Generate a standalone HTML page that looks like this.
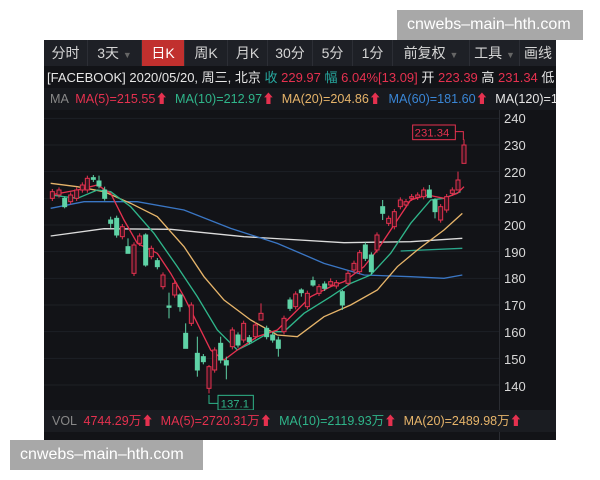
<!DOCTYPE html>
<html><head><meta charset="utf-8"><style>
*{margin:0;padding:0;box-sizing:border-box}
body{width:600px;height:480px;background:#fff;position:relative;overflow:hidden;font-family:"Liberation Sans","Noto Sans CJK SC",sans-serif}
.panel{position:absolute;left:44px;top:40px;width:512px;height:400px;background:#121317}
.tb{position:absolute;left:0;top:0;width:512px;height:26px;background:#1e2026;display:flex}
.tb div{height:26px;line-height:26px;color:#d6d6d6;font-size:14px;text-align:center;border-right:1px solid #2c2e35}
.tb .on{background:#c1302e;color:#fff}
.tb .ar{color:#666;font-size:9px}
.row{position:absolute;left:0;width:512px;white-space:nowrap;overflow:hidden;font-size:12px;padding-left:4px}
.r{color:#e5314f}.g{color:#2fb58a}.o{color:#e6b46a}.b{color:#3a86d6}.w{color:#e6e6e6}.gr{color:#888}.t{color:#27a9a0}
.wm{position:absolute;background:#a8a8a8;color:#fff;font-size:16px;line-height:30px;padding:0 10px}
.ax{position:absolute;left:460px;color:#d8d8d8;font-size:13px}
</style></head><body>
<div class="wm" style="left:397px;top:10px;width:186px">cnwebs–main–hth.com</div>
<div class="panel">
<div class="tb">
<div style="width:44px">分时</div>
<div style="width:54px">3天 <span class="ar">▼</span></div>
<div class="on" style="width:43px">日K</div>
<div style="width:43px">周K</div>
<div style="width:40px">月K</div>
<div style="width:45px">30分</div>
<div style="width:40px">5分</div>
<div style="width:40px">1分</div>
<div style="width:77px">前复权 <span class="ar">▼</span></div>
<div style="width:50px">工具 <span class="ar">▼</span></div>
<div style="width:36px;border:none">画线</div>
</div>
<div class="row w" style="top:28px;height:20px;line-height:20px;font-size:13px;padding-left:3px">[FACEBOOK] 2020/05/20, 周三, 北京 <span class="t">收</span> <span class="r">229.97</span> <span class="t">幅</span> <span class="r">6.04%[13.09]</span> 开 <span class="r">223.39</span> 高 <span class="r">231.34</span> 低</div>
<div class="row" style="top:48px;height:22px;line-height:22px;background:#17191e;padding-left:6px;font-size:12.6px"><span class="gr">MA</span> &nbsp;<span class="r">MA(5)=215.55⬆</span>&nbsp; <span class="g">MA(10)=212.97</span><span class="r">⬆</span>&nbsp; <span class="o">MA(20)=204.86</span><span class="r">⬆</span>&nbsp; <span class="b">MA(60)=181.60</span><span class="r">⬆</span>&nbsp; <span class="w">MA(120)=195</span></div>
<div style="position:absolute;left:455px;top:70px;width:1px;height:330px;background:#2a2c32"></div>
<div class="ax" style="top:71px">240</div><div class="ax" style="top:98px">230</div><div class="ax" style="top:125px">220</div><div class="ax" style="top:151px">210</div><div class="ax" style="top:178px">200</div><div class="ax" style="top:205px">190</div><div class="ax" style="top:231px">180</div><div class="ax" style="top:258px">170</div><div class="ax" style="top:285px">160</div><div class="ax" style="top:312px">150</div><div class="ax" style="top:339px">140</div>
<svg style="position:absolute;left:0;top:70px" width="512" height="300" viewBox="0 0 1536 900">
<g stroke="#1d2026" stroke-width="3">
<line x1="0" y1="25" x2="1365" y2="25"/><line x1="0" y1="105" x2="1365" y2="105"/><line x1="0" y1="185" x2="1365" y2="185"/><line x1="0" y1="265" x2="1365" y2="265"/><line x1="0" y1="345" x2="1365" y2="345"/><line x1="0" y1="425" x2="1365" y2="425"/><line x1="0" y1="505" x2="1365" y2="505"/><line x1="0" y1="585" x2="1365" y2="585"/><line x1="0" y1="665" x2="1365" y2="665"/><line x1="0" y1="745" x2="1365" y2="745"/><line x1="0" y1="825" x2="1365" y2="825"/>
</g>
<g fill="none" stroke-width="4">
<polyline stroke="#dcdcdc" points="20,378 180,356 380,358 600,380 900,398 1100,395 1255,385"/>
<polyline stroke="#3a76c4" points="20,295 120,275 280,275 420,300 560,355 700,400 840,460 960,495 1100,500 1200,505 1255,495"/>
<polyline stroke="#2aa58a" points="1070,423 1255,415"/>
<polyline stroke="#e6b46a" points="20,220 100,230 180,245 260,280 340,320 420,410 480,500 540,570 620,630 700,675 760,680 840,620 920,585 1000,540 1060,470 1120,420 1200,360 1255,310"/>
<polyline stroke="#2fb58a" points="20,255 100,265 160,240 200,245 260,290 330,370 400,470 460,560 520,660 580,720 620,700 680,665 720,665 780,610 860,560 920,520 980,495 1040,430 1100,340 1160,270 1200,265 1250,245"/>
<polyline stroke="#e5314f" points="20,255 100,240 160,225 200,250 240,330 280,400 340,430 380,490 420,560 460,640 500,720 540,750 580,720 640,680 700,660 760,600 800,560 860,530 900,515 960,470 1000,420 1060,330 1100,270 1150,255 1200,265 1240,250 1260,230"/>
</g>
<g id="c" stroke-width="3"></g>
<g fill="none" stroke="#e5314f" stroke-width="3"><rect x="1106" y="45" width="128" height="44"/><polyline points="1234,65 1258,65 1258,90"/></g>
<text x="1112" y="80" fill="#e5314f" font-size="34" font-family="Liberation Sans">231.34</text>
<g fill="none" stroke="#2fb58a" stroke-width="3"><rect x="522" y="856" width="106" height="44"/><polyline points="495,855 495,880 522,880"/></g>
<text x="530" y="893" fill="#2fb58a" font-size="34" font-family="Liberation Sans">137.1</text>
</svg>
<div class="row" style="top:370px;height:22px;line-height:22px;background:#1a1c21;font-size:12.5px;padding-left:8px"><span class="gr">VOL</span> &nbsp;<span class="r">4744.29万⬆</span>&nbsp; <span class="r">MA(5)=2720.31万⬆</span>&nbsp; <span class="g">MA(10)=2119.93万</span><span class="r">⬆</span>&nbsp; <span class="o">MA(20)=2489.98万</span><span class="r">⬆</span></div>
</div>
<div class="wm" style="left:10px;top:440px;width:193px">cnwebs–main–hth.com</div>
<script>
var d=[[25,'r',245,265],[45,'r',240,255],[62,'g',265,290,260,295],[80,'r',255,275],[98,'r',240,265],[115,'r',225,240],[130,'r',205,240],[148,'g',203,208],[165,'g',213,228,197,235],[182,'g',240,265,230,272],[200,'g',330,340,320,355],[218,'g',325,375],[235,'r',350,380],[252,'g',410,430,385,430],[270,'r',405,490],[287,'r',378,400],[305,'g',375,465,370,470],[322,'r',415,440],[340,'g',452,470],[357,'r',495,530],[375,'g',588,592,548,625],[392,'r',520,555],[408,'g',555,590,550,605],[425,'g',670,715,640,715],[442,'r',585,640],[460,'g',730,780,680,800],[478,'g',740,755],[495,'r',770,835,765,850],[512,'r',720,780],[530,'g',700,750,680,760],[547,'g',752,765,740,808],[565,'r',660,710],[582,'g',675,705],[599,'r',640,690],[616,'g',683,695],[634,'r',645,680],[651,'r',610,630,580,630],[668,'g',655,680],[686,'g',675,690],[703,'g',690,715,680,740],[720,'r',625,665],[738,'g',570,595],[755,'r',552,590],[772,'g',540,548,535,560],[790,'r',550,590],[807,'g',512,525,500,530],[825,'r',530,550],[842,'g',522,535],[860,'r',515,525,505,530],[877,'r',518,528],[895,'g',545,585,540,600],[912,'r',490,520],[930,'r',460,480],[947,'r',428,485],[964,'g',405,445],[982,'g',435,485],[999,'r',375,420],[1016,'g',290,310,270,330],[1034,'r',325,340],[1051,'r',305,350],[1069,'r',270,290],[1086,'r',275,285],[1103,'r',260,265],[1121,'r',255,262],[1139,'r',240,260],[1156,'g',240,262,225,262],[1173,'g',270,305,265,325],[1190,'r',290,330],[1208,'r',260,300],[1225,'r',240,250],[1242,'r',210,240,185,240],[1260,'r',105,160,88,160]];
var s='';d.forEach(function(c){var x=c[0],t=c[2],b=c[3],wt=c[4]||t-8,wb=c[5]||b+8;var col=c[1]=='r'?'#e5314f':'#5fd3a6';s+='<line x1="'+x+'" y1="'+wt+'" x2="'+x+'" y2="'+wb+'" stroke="'+col+'"/>';s+='<rect x="'+(x-6)+'" y="'+t+'" width="12" height="'+Math.max(b-t,4)+'" fill="'+(c[1]=='r'?'#3a1520':col)+'" stroke="'+col+'"/>';});
document.getElementById('c').innerHTML=s;
</script>
</body></html>
